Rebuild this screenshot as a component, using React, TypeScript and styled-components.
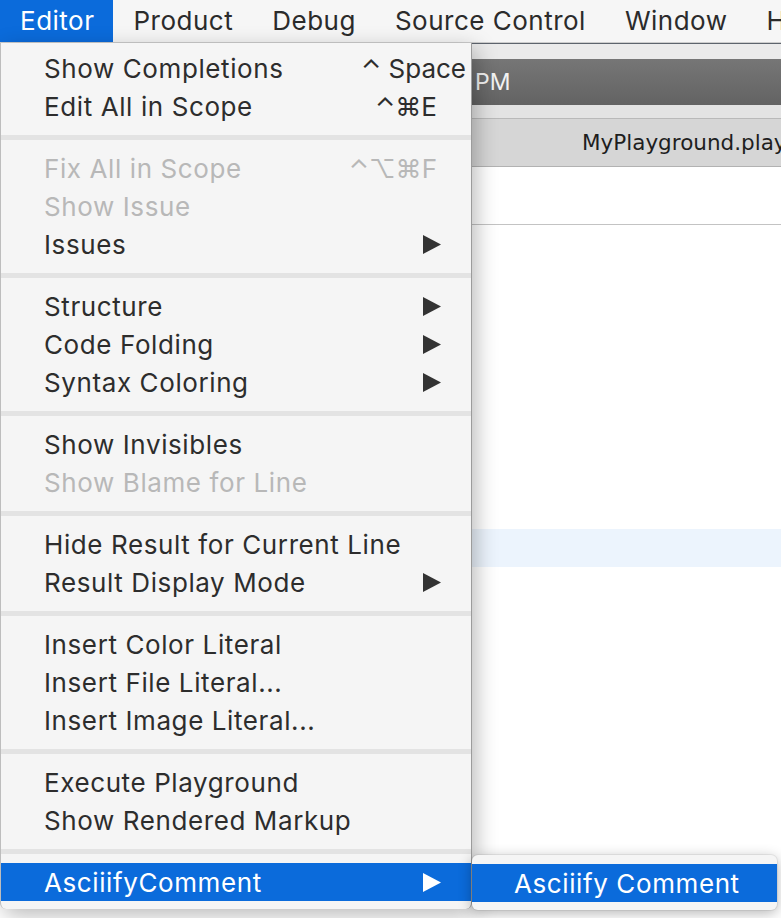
import React from "react";
import styled, {createGlobalStyle} from "styled-components";

const GlobalStyle = createGlobalStyle`
    html, body {
        margin: 0;
        padding: 0;
        background: #ffffff;
        overflow: hidden;
    }
`;

const fontStack = `Inter, "DejaVu Sans", "Liberation Sans", sans-serif`;

//============ DATA ====================
type Item = {
    label: string,
    shortcut?: string,
    shortcutRight?: number,
    disabled?: boolean,
    submenu?: boolean,
    active?: boolean
};

const groups: Item[][] = [
    [
        {label: "Show Completions", shortcut: "\u2303 Space", shortcutRight: 5},
        {label: "Edit All in Scope", shortcut: "\u2303\u2318E", shortcutRight: 34},
    ],
    [
        {label: "Fix All in Scope", shortcut: "\u2303\u2325\u2318F", shortcutRight: 34, disabled: true},
        {label: "Show Issue", disabled: true},
        {label: "Issues", submenu: true},
    ],
    [
        {label: "Structure", submenu: true},
        {label: "Code Folding", submenu: true},
        {label: "Syntax Coloring", submenu: true},
    ],
    [
        {label: "Show Invisibles"},
        {label: "Show Blame for Line", disabled: true},
    ],
    [
        {label: "Hide Result for Current Line"},
        {label: "Result Display Mode", submenu: true},
    ],
    [
        {label: "Insert Color Literal"},
        {label: "Insert File Literal..."},
        {label: "Insert Image Literal..."},
    ],
    [
        {label: "Execute Playground"},
        {label: "Show Rendered Markup"},
    ],
    [
        {label: "AsciiifyComment", submenu: true, active: true},
    ],
];

const topMenus = ["Editor", "Product", "Debug", "Source Control", "Window", "Help"];

//============ STYLES ====================
const Screen = styled.div`
    position: relative;
    display: flex;
    flex-direction: column;
    width: 781px;
    height: 918px;
    overflow: hidden;
    font-family: ${fontStack};
    background: #ffffff;
`;

const MenuBar = styled.div`
    display: flex;
    flex-shrink: 0;
    height: 42px;
    background: #f6f6f6;
    border-bottom: 1px solid #cdcdcd;
    white-space: nowrap;
`;

const MenuBarItem = styled.div<{ $open?: boolean }>`
    padding: 0 19px 0 20px;
    line-height: 42px;
    font-size: 26px;
    letter-spacing: 0.5px;
    color: ${p => p.$open ? "#ffffff" : "#2b2b2b"};
    background: ${p => p.$open ? "#0b6bdb" : "transparent"};
`;

const XcodeWindow = styled.div`
    flex: 1;
    display: flex;
    flex-direction: column;
    border-top: 1px solid #5d646d;
    background: #ffffff;
`;

const WindowTop = styled.div`
    height: 15px;
    background: #ebebeb;
`;

const TitleBar = styled.div`
    height: 46px;
    background: linear-gradient(#767676, #636363);
    color: #f2f2f2;
    font-size: 23px;
    line-height: 46px;
    padding-left: 475px;
    white-space: nowrap;
`;

const Toolbar = styled.div`
    height: 13px;
    background: #e3e3e3;
    border-bottom: 1px solid #b9b9b9;
`;

const TabBar = styled.div`
    height: 47px;
    background: #d6d6d6;
    border-bottom: 1px solid #b2b2b2;
    color: #1e1e1e;
    font-family: "DejaVu Sans", ${fontStack};
    font-size: 21.5px;
    line-height: 47px;
    padding-left: 582px;
    white-space: nowrap;
    overflow: hidden;
`;

const JumpBar = styled.div`
    height: 57px;
    border-bottom: 1px solid #c3c3c3;
`;

const CodeLine = styled.div<{ $current?: boolean }>`
    height: 38px;
    flex-shrink: 0;
    background: ${p => p.$current ? "#ecf4fd" : "#ffffff"};
`;

const Menu = styled.div`
    position: absolute;
    left: 0;
    top: 43px;
    width: 472px;
    padding: 6px 0 8px;
    background: #f5f5f5;
    border-left: 1px solid #bdbdbd;
    border-right: 1px solid #9c9c9c;
    border-radius: 0 0 6px 6px;
    box-shadow: 4px 6px 22px rgba(0, 0, 0, 0.28);
    box-sizing: border-box;
`;

const Separator = styled.div`
    height: 24px;
    display: flex;
    align-items: center;

    &::before {
        content: "";
        flex: 1;
        height: 5px;
        background: #e3e3e3;
    }
`;

const Row = styled.div<{ $disabled?: boolean, $active?: boolean, $indent?: number }>`
    display: flex;
    align-items: center;
    height: 38px;
    padding-left: ${p => p.$indent ?? 43}px;
    font-size: 26px;
    letter-spacing: 0.6px;
    white-space: nowrap;
    color: ${p => p.$active ? "#ffffff" : p.$disabled ? "#b8b8b8" : "#2d2d2d"};
    background: ${p => p.$active ? "#0b6bdb" : "transparent"};
`;

const Label = styled.span`
    flex: 1;
`;

const Shortcut = styled.span<{ $right: number }>`
    margin-right: ${p => p.$right}px;
    letter-spacing: 0;
`;

const Arrow = styled.svg`
    margin-right: 30px;
    flex-shrink: 0;
`;

const SubMenu = styled.div`
    position: absolute;
    left: 472px;
    top: 855px;
    width: 305px;
    padding: 9px 0 8px;
    background: #f5f5f5;
    border-radius: 6px;
    box-shadow: 0 3px 14px rgba(0, 0, 0, 0.3), 0 0 0 1px rgba(0, 0, 0, 0.06);
`;

//============== COMPONENT =================
const SubArrow: React.FC<{ color: string }> = ({color}) => (
    <Arrow width="18" height="19" viewBox="0 0 18 19">
        <polygon points="0,0 18,9.5 0,19" fill={color}/>
    </Arrow>
);

const App: React.FC = () => {
    return (
        <Screen>
            <GlobalStyle/>
            <MenuBar>
                {topMenus.map((m, i) => (
                    <MenuBarItem key={m} $open={i === 0}>{m}</MenuBarItem>
                ))}
            </MenuBar>

            <XcodeWindow>
                <WindowTop/>
                <TitleBar>PM</TitleBar>
                <Toolbar/>
                <TabBar>MyPlayground.playground</TabBar>
                <JumpBar/>
                {Array.from({length: 18}).map((_, i) => (
                    <CodeLine key={i} $current={i === 8}/>
                ))}
            </XcodeWindow>

            <Menu>
                {groups.map((group, gi) => (
                    <React.Fragment key={gi}>
                        {gi > 0 && <Separator/>}
                        {group.map(item => (
                            <Row key={item.label} $disabled={item.disabled} $active={item.active}>
                                <Label>{item.label}</Label>
                                {item.shortcut &&
                                <Shortcut $right={item.shortcutRight ?? 34}>{item.shortcut}</Shortcut>}
                                {item.submenu && <SubArrow color={item.active ? "#ffffff" : "#333333"}/>}
                            </Row>
                        ))}
                    </React.Fragment>
                ))}
            </Menu>

            <SubMenu>
                <Row $active $indent={42}>
                    <Label>Asciiify Comment</Label>
                </Row>
            </SubMenu>
        </Screen>
    )
};

export default App;
